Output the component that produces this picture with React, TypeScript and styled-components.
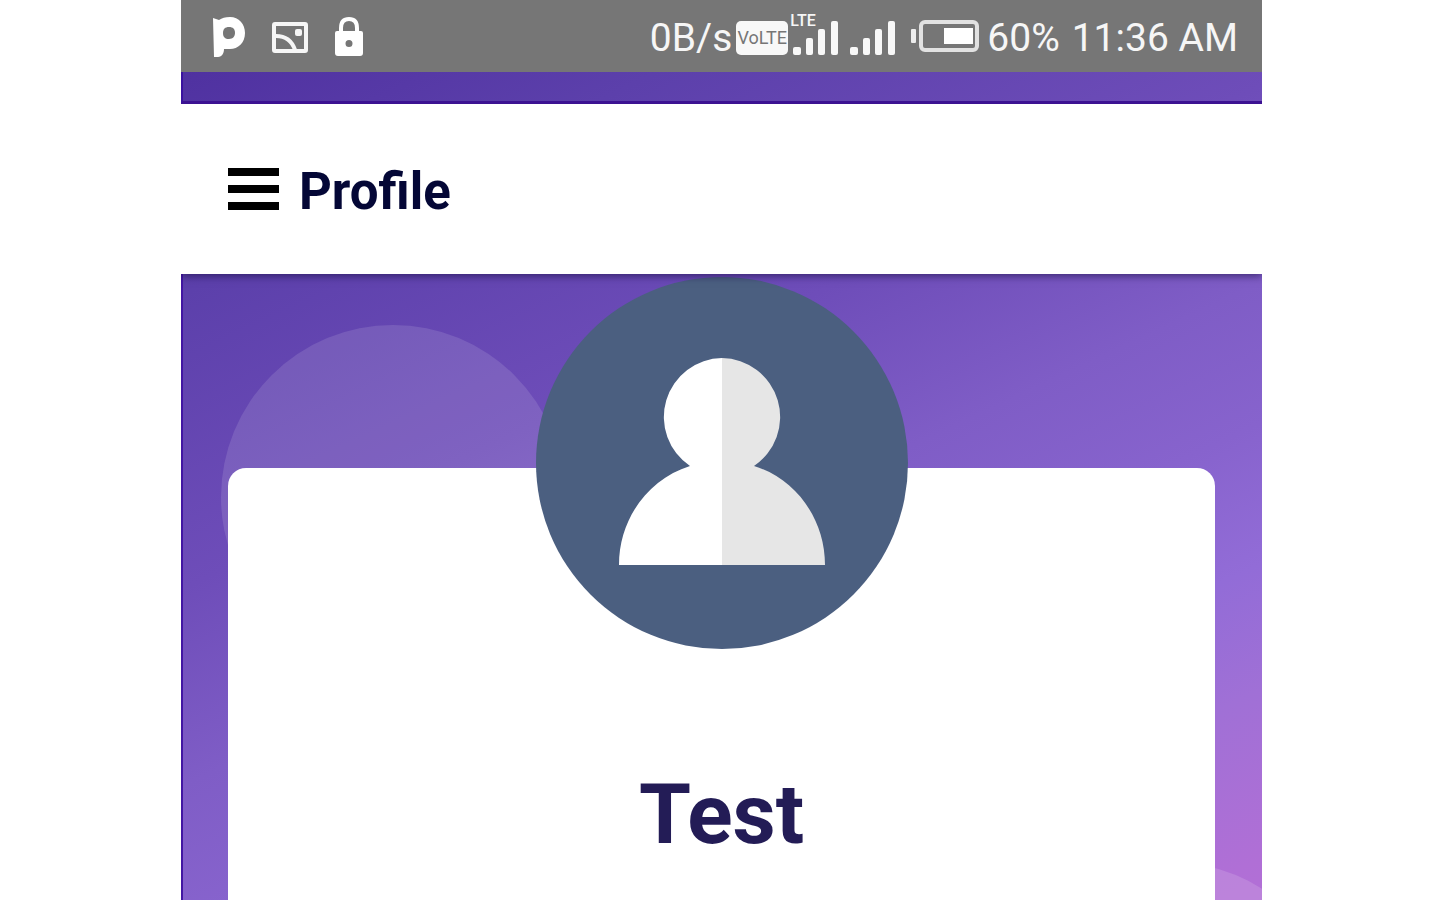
import React from "react";
import styled, { createGlobalStyle } from "styled-components";

const GlobalStyle = createGlobalStyle`
  * { box-sizing: border-box; }
  html, body { margin: 0; background: #ffffff; }
  body { font-family: Roboto, "Liberation Sans", sans-serif; }
`;

const Page = styled.div`
  display: grid;
  grid-template-columns: 181fr 1081fr 178fr;
  height: 100vh;
  overflow: hidden;
`;

const Phone = styled.div`
  grid-column: 2;
  display: flex;
  flex-direction: column;
  min-height: 0;
  background: linear-gradient(
    155deg,
    #4a2c9b 0%,
    #5032a1 6%,
    #5c40ab 21%,
    #6e4db9 42%,
    #7f5dc6 56%,
    #8763cd 66%,
    #926cd7 76%,
    #a070d6 85%,
    #b06fd6 97%,
    #b26fd6 100%
  );
`;

const StatusBar = styled.div`
  display: flex;
  flex: none;
  align-items: center;
  justify-content: space-between;
  height: 72px;
  padding: 4px 24px 0 32px;
  background: #767676;
  color: #f6f6f6;
  font-size: 39px;
  line-height: 48px;
  white-space: nowrap;
`;

const StatusGroup = styled.div<{ $gap: number }>`
  display: flex;
  align-items: center;
  gap: ${(p) => p.$gap}px;
`;

const Battery = styled(StatusGroup)`
  margin-left: 4px;
`;

const VolteBadge = styled.span`
  display: flex;
  align-items: center;
  justify-content: center;
  width: 52px;
  height: 34px;
  margin: 0 -7px 0 -8px;
  border-radius: 5px;
  background: #f8f8f8;
  color: #767676;
  font-size: 18px;
  line-height: 34px;
`;

const Signal = styled.span`
  position: relative;
  display: flex;
`;

const SignalLabel = styled.span`
  position: absolute;
  top: -10px;
  left: -3px;
  font-size: 16px;
  font-weight: 500;
  line-height: 20px;
`;

const TopStrip = styled.div`
  flex: none;
  height: 32px;
  border-left: 2px solid #3a12a0;
  border-bottom: 3px solid #3c1292;
`;

const Header = styled.header`
  position: relative;
  z-index: 2;
  display: flex;
  flex: none;
  align-items: center;
  gap: 20px;
  height: 170px;
  padding: 0 47px;
  background: #ffffff;
  box-shadow: 0 2px 8px rgba(20, 10, 60, 0.6);
  clip-path: inset(0 0 -16px 0);
`;

const MenuButton = styled.button`
  display: flex;
  flex-direction: column;
  gap: 9px;
  width: 51px;
  padding: 0;
  border: 0;
  background: none;
  cursor: pointer;
`;

const MenuLine = styled.span`
  height: 8px;
  background: #000000;
`;

const Title = styled.h1`
  margin: 0;
  padding-top: 5px;
  color: #040736;
  font-size: 51px;
  font-weight: 700;
  line-height: 60px;
`;

const Content = styled.main`
  position: relative;
  display: flex;
  flex: 1;
  flex-direction: column;
  min-height: 0;
  padding: 194px 47px 0 45px;
  border-left: 2px solid #4216a3;
  overflow: hidden;
`;

const Bubble = styled.span<{ $x: string; $y: number; $alpha: number }>`
  position: absolute;
  top: ${(p) => p.$y}px;
  left: ${(p) => p.$x};
  width: 344px;
  height: 344px;
  border-radius: 50%;
  background: rgba(255, 255, 255, ${(p) => p.$alpha});
`;

const Card = styled.section`
  position: relative;
  display: flex;
  flex: 1;
  flex-direction: column;
  align-items: center;
  border-radius: 18px 18px 0 0;
  background: #ffffff;
`;

const Avatar = styled.svg`
  flex: none;
  width: 372px;
  height: 372px;
  margin-top: -191px;
`;

const Name = styled.h2`
  margin: 116px 0 0;
  color: #231c56;
  font-size: 84px;
  font-weight: 700;
  line-height: 100px;
`;

const PIcon = () => (
  <svg width="33" height="42" viewBox="0 0 33 42" aria-hidden="true">
    <path
      fillRule="evenodd"
      fill="#fff"
      d="M0 1 L6 3 C9 1 12 0 17 0 C26 0 32 7 32 16 C32 26 25 32 17 32 L11 32 C11 36 9 40 5 40 L1 40 Z M16 10 C12 10 10 12 10 16 C10 20 12 22 16 22 C20 22 22 19 22 16 C22 12 20 10 16 10 Z"
    />
  </svg>
);

const PictureIcon = () => (
  <svg width="36" height="34" viewBox="0 0 36 34" aria-hidden="true">
    <rect x="2" y="3" width="32" height="27" rx="1" fill="none" stroke="#f6f6f6" strokeWidth="4" />
    <path d="M4 15 C14 15 20 20 23 29" fill="none" stroke="#f6f6f6" strokeWidth="4" />
    <rect x="23" y="8" width="7" height="7" rx="2" fill="#f6f6f6" />
  </svg>
);

const LockIcon = () => (
  <svg width="30" height="42" viewBox="0 0 30 42" aria-hidden="true">
    <path d="M7 16 V11 C7 5 10 2 15 2 C20 2 23 5 23 11 V16" fill="none" stroke="#fff" strokeWidth="4" />
    <path
      fillRule="evenodd"
      fill="#fff"
      d="M3 14 H27 Q29 14 29 16 V36 Q29 39 26 39 H4 Q1 39 1 36 V16 Q1 14 3 14 Z M15 23 A3.5 3.5 0 1 0 15 30 A3.5 3.5 0 1 0 15 23 Z"
    />
  </svg>
);

const SignalIcon = () => (
  <svg width="45" height="35" viewBox="0 0 45 35" fill="#f8f8f8" aria-hidden="true">
    <rect x="0" y="26" width="8" height="8" rx="2" />
    <rect x="13" y="17" width="7" height="17" rx="2" />
    <rect x="25" y="8" width="7" height="26" rx="2" />
    <rect x="38" y="0" width="7" height="34" rx="2" />
  </svg>
);

const BatteryIcon = () => (
  <svg width="68" height="36" viewBox="0 0 68 36" aria-hidden="true">
    <rect x="0" y="9" width="5" height="14" rx="1" fill="#ededed" />
    <rect x="10" y="2" width="56" height="28" rx="4" fill="none" stroke="#e2e2e2" strokeWidth="4" />
    <rect x="33" y="8" width="29" height="16" fill="#fff" />
  </svg>
);

export default function App() {
  return (
    <>
      <GlobalStyle />
      <Page>
        <Phone>
          <StatusBar>
            <StatusGroup $gap={26}>
              <PIcon />
              <PictureIcon />
              <LockIcon />
            </StatusGroup>
            <StatusGroup $gap={12}>
              <span>0B/s</span>
              <VolteBadge>VoLTE</VolteBadge>
              <Signal>
                <SignalLabel>LTE</SignalLabel>
                <SignalIcon />
              </Signal>
              <Signal>
                <SignalIcon />
              </Signal>
              <Battery $gap={8}>
                <BatteryIcon />
                <span>60%</span>
              </Battery>
              <time>11:36 AM</time>
            </StatusGroup>
          </StatusBar>
          <TopStrip />
          <Header>
            <MenuButton type="button" aria-label="Menu">
              <MenuLine />
              <MenuLine />
              <MenuLine />
            </MenuButton>
            <Title>Profile</Title>
          </Header>
          <Content>
            <Bubble $x="38px" $y={51} $alpha={0.12} />
            <Bubble $x="calc(100% - 264px)" $y={588} $alpha={0.14} />
            <Card>
              <Avatar viewBox="0 0 372 372" role="img" aria-label="User avatar">
                <circle cx="186" cy="186" r="186" fill="#4b5f80" />
                <path
                  fill="#ffffff"
                  d="M186 81 A59 59 0 0 0 154 189 C112 202 83 242 83 288 H186 Z"
                />
                <path
                  fill="#e6e6e6"
                  d="M186 81 A59 59 0 0 1 218 189 C260 202 289 242 289 288 H186 Z"
                />
              </Avatar>
              <Name>Test</Name>
            </Card>
          </Content>
        </Phone>
      </Page>
    </>
  );
}
